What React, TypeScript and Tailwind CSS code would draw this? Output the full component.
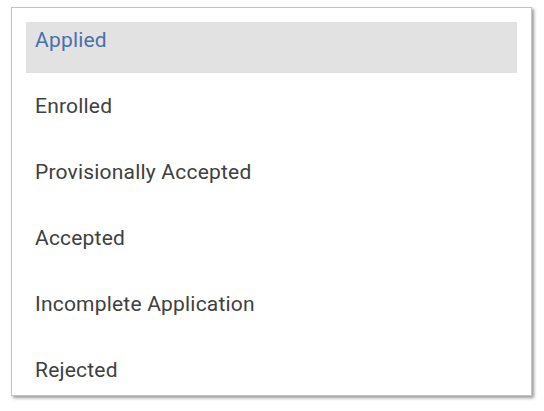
import React from "react";

const items = [
  "Applied",
  "Enrolled",
  "Provisionally Accepted",
  "Accepted",
  "Incomplete Application",
  "Rejected",
];

export default function App() {
  return (
    <div className="w-[544px] h-[411px] bg-white pl-[11px] pt-[7px]" style={{ fontFamily: "Roboto, sans-serif" }}>
      <div className="w-[521px] h-[389px] bg-white border border-[#c4c4c4] shadow-[2px_2px_3px_rgba(0,0,0,0.4)] overflow-hidden px-[14px] pt-[14px]">
        <div className="flex flex-col gap-[15px]">
          {items.map((t, i) => (
            <div
              key={t}
              className={
                "h-[51px] shrink-0 pl-[9px] pt-[6px] text-[21px] leading-[24px] tracking-[0.2px] " +
                (i === 0 ? "bg-[#e2e2e2] text-[#4a70ab]" : "text-[#404040]")
              }
            >
              {t}
            </div>
          ))}
        </div>
      </div>
    </div>
  );
}
